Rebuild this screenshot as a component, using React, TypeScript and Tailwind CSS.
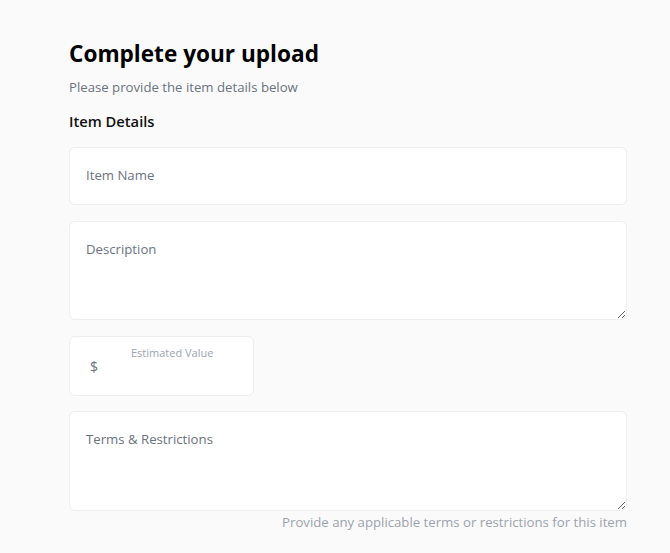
import React from 'react';

export default function App() {
    return (
        <div className="min-h-[553px] bg-[#fafafa] font-['Open_Sans',sans-serif]">
            <div className="w-[558px] ml-[69px] pt-[38px]">
                <h1 className="text-[22.6px] leading-[32px] font-bold text-black">Complete your upload</h1>
                <p className="mt-[7px] text-[13.2px] leading-[20px] text-[#6b7280]">Please provide the item details below</p>
                <h2 className="mt-[12px] text-[14.7px] leading-[24px] font-semibold text-[#111]">Item Details</h2>

                <div className="mt-[14px] flex flex-col gap-4">
                    <input
                        type="text"
                        placeholder="Item Name"
                        className="h-[58px] w-full px-4 pb-[3px] bg-white border border-[#eeeef3] rounded-md text-[13.2px] outline-none placeholder:text-[#6b7280]"
                    />
                    <textarea
                        placeholder="Description"
                        className="block h-[99px] w-full px-4 pt-[15px] pb-4 bg-white border border-[#eeeef3] rounded-md text-[13.2px] leading-[24px] outline-none placeholder:text-[#6b7280]"
                    />
                    <div className="relative h-[60px] w-[185px] bg-white border border-[#eeeef3] rounded-md">
                        <span className="absolute left-[20px] top-[19px] text-[14px] text-[#6b7280]">$</span>
                        <span className="absolute left-[61px] top-[9px] text-[11px] leading-[14px] text-[#9ca3af]">Estimated Value</span>
                        <input type="text" className="h-full w-full pl-[61px] pt-4 bg-transparent text-[13.2px] outline-none" />
                    </div>
                    <textarea
                        placeholder="Terms & Restrictions"
                        className="block -mt-px h-[100px] w-full px-4 pt-[15px] pb-4 bg-white border border-[#eeeef3] rounded-md text-[13.2px] leading-[24px] outline-none placeholder:text-[#6b7280]"
                    />
                </div>
                <p className="mt-[1px] text-right text-[13.2px] leading-[20px] text-[#9ca3af]">
                    Provide any applicable terms or restrictions for this item
                </p>
            </div>
        </div>
    );
}
